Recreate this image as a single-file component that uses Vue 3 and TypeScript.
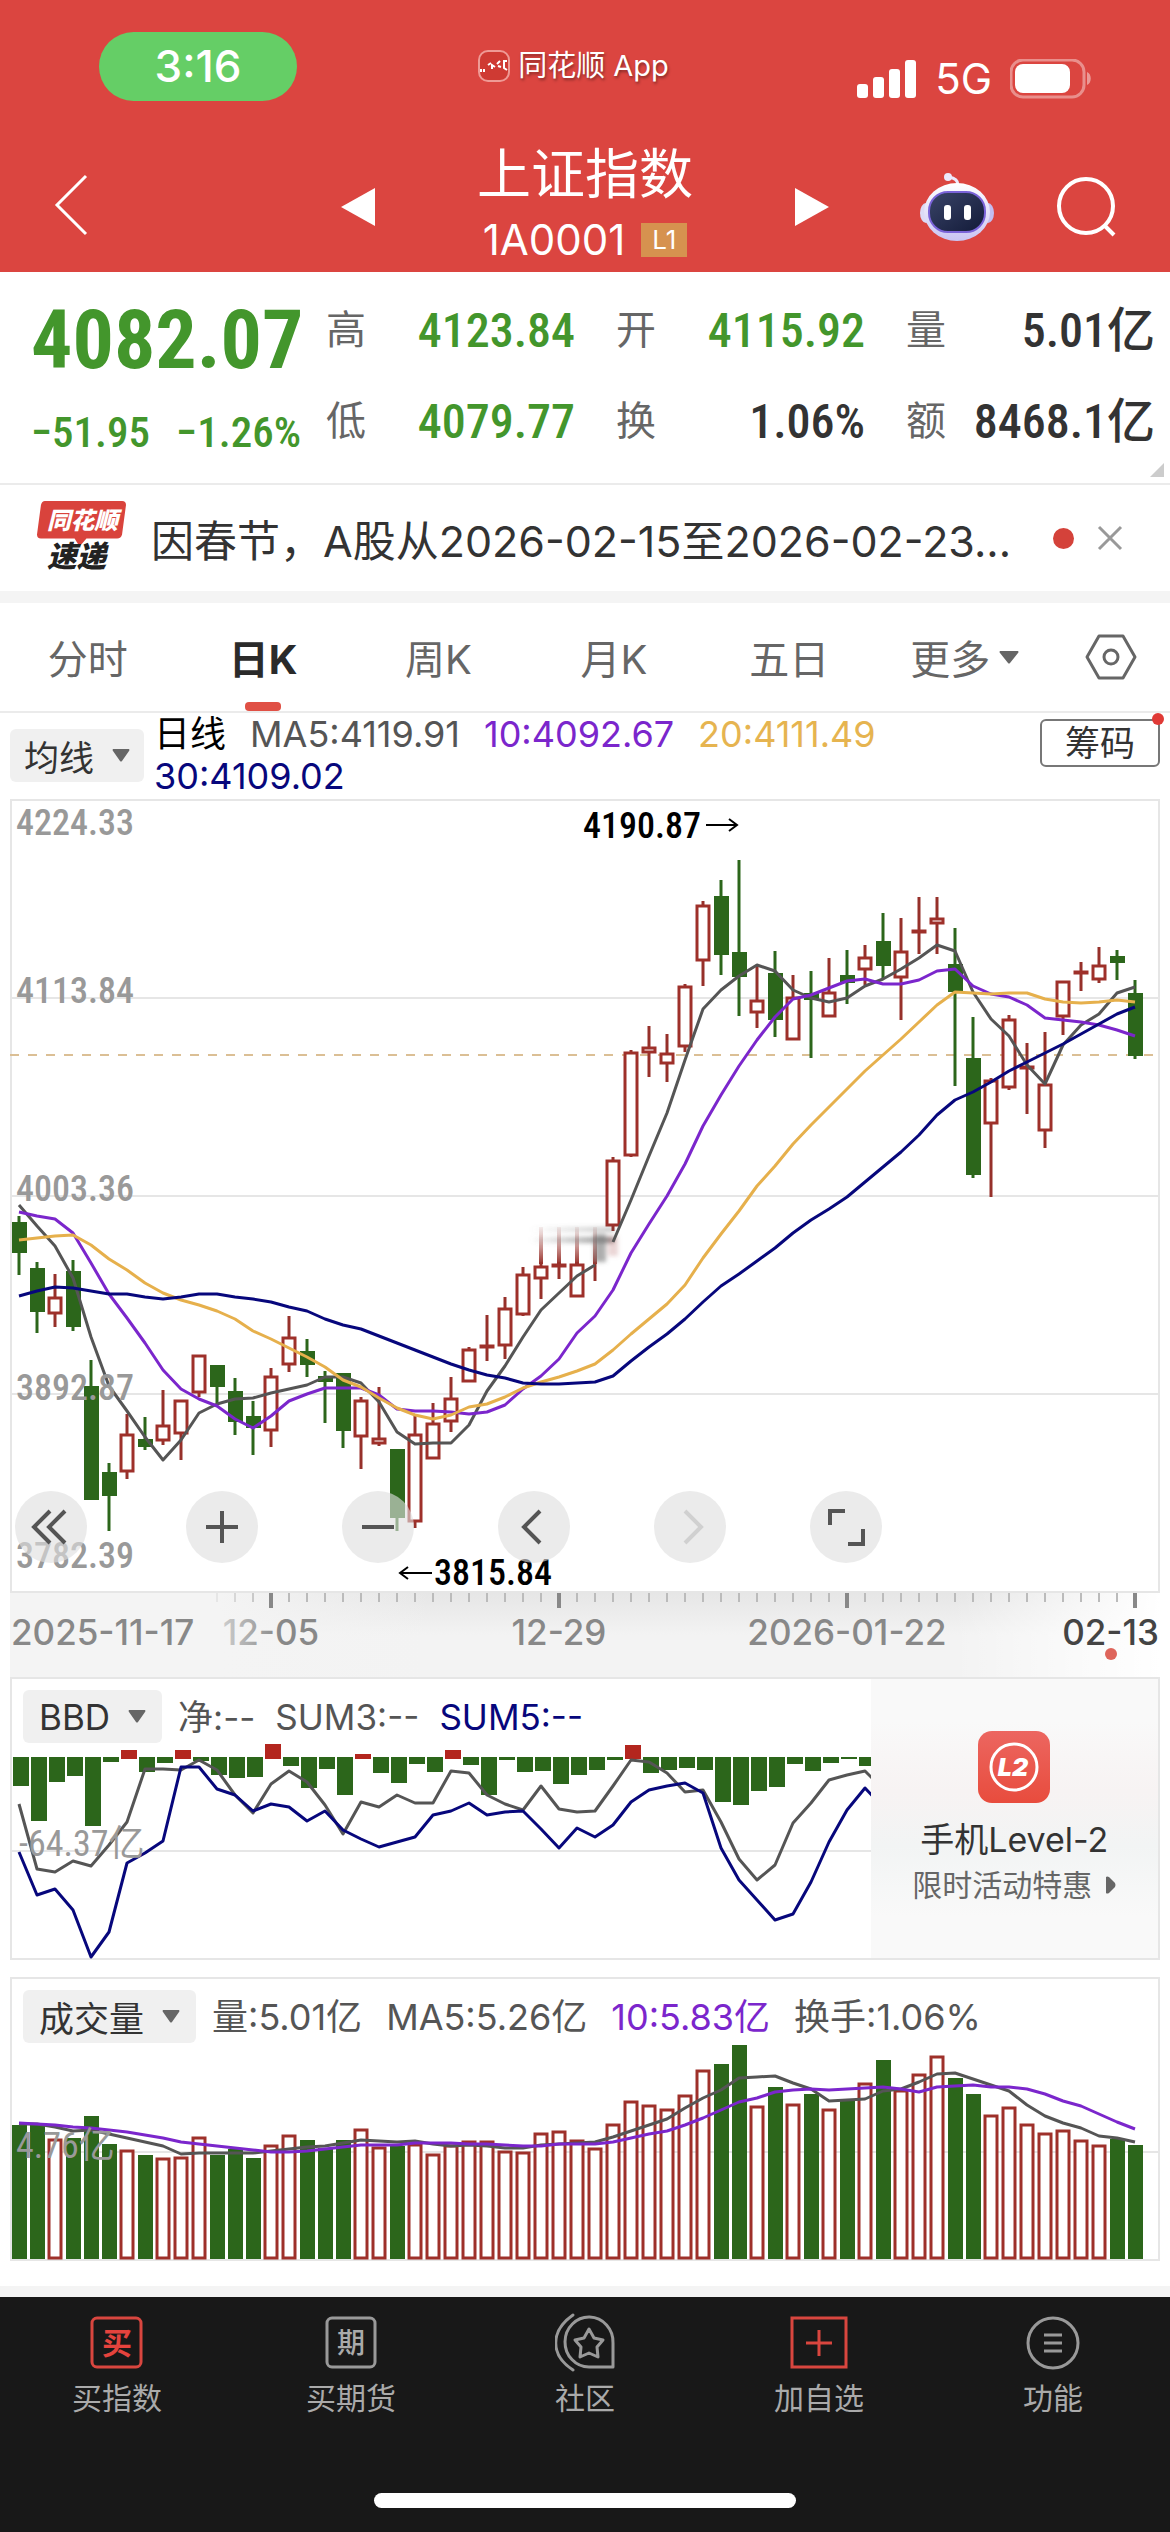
<script setup lang="ts">
type Candle = { up: boolean; high: number; top: number; bottom: number; low: number }

const STEP = 18
const FIRST = 9

const cx = (i: number): number => FIRST + STEP * i
const line = (values: number[]): string => values.map((y, i) => `${cx(i)},${y}`).join(' ')

const quotes = [
  { label: '高', value: '4123.84', down: true },
  { label: '开', value: '4115.92', down: true },
  { label: '量', value: '5.01亿', down: false },
  { label: '低', value: '4079.77', down: true },
  { label: '换', value: '1.06%', down: false },
  { label: '额', value: '8468.1亿', down: false },
]

const tabs = ['分时', '日K', '周K', '月K', '五日']

// u = rising day, d = falling day; then high, body top, body bottom, low in chart units
const rawCandles = `
d 416 422 453 475|d 462 468 512 533|u 474 497 514 527|d 460 471 527 531|d 560 586 700 700|d 663 672 696 731|u 614 634 672 679
d 617 639 647 650|u 590 625 641 645|u 600 600 634 660|u 555 555 593 597|d 565 565 587 603|d 578 591 622 635|d 601 616 628 655
u 568 576 631 647|u 516 537 565 572|d 539 551 565 577|d 571 576 582 623|d 573 573 631 648|u 597 600 637 669|u 587 638 644 646
d 649 649 718 731|u 616 634 722 728|u 603 623 659 659|u 577 598 622 632|u 547 549 582 582|u 515 545 548 561|u 497 508 546 559
u 467 474 515 516|u 462 466 479 499|u 462 464 467 479|u 462 464 497 497|u 462 462 462 481|u 357 360 426 431|u 250 252 356 357
u 226 247 253 277|u 234 253 264 282|u 184 186 247 252|u 101 105 161 186|d 80 96 155 175|d 60 152 177 216|u 165 200 213 228
d 151 173 220 237|u 175 197 240 240|d 171 193 200 258|u 158 192 217 217|d 150 175 183 204|u 145 157 170 185|d 113 141 166 178
u 118 151 178 220|u 97 130 133 154|u 97 118 124 154|d 128 164 192 286|d 217 258 375 378|u 278 280 324 397|u 215 219 288 290
u 243 266 269 314|u 232 284 331 348|u 181 181 217 235|u 162 171 174 191|u 147 165 180 183|d 150 156 163 180|d 180 193 256 259`

const candles: Candle[] = rawCandles
  .trim()
  .split(/[|\n]/)
  .map((row) => {
    const [kind, high, top, bottom, low] = row.trim().split(' ')
    return { up: kind === 'u', high: +high, top: +top, bottom: +bottom, low: +low }
  })

const ma5a = [405, 426, 446, 478, 537, 586, 611, 637, 660, 640, 613, 604, 599, 598, 593, 589, 585, 577, 577, 583, 602, 632, 644, 643, 643, 625, 591, 566, 537, 510, 493, 476, 465]
const ma5b = [442, 400, 356, 313, 260, 209, 190, 176, 165, 171, 190, 198, 202, 198, 186, 179, 169, 158, 145, 151, 192, 219, 236, 265, 284, 245, 225, 214, 193, 187]
const ma10 = [412, 416, 419, 433, 463, 494, 518, 543, 570, 589, 599, 606, 619, 628, 616, 601, 594, 588, 588, 588, 595, 609, 611, 611, 612, 614, 612, 605, 589, 576, 559, 533, 516, 490, 453, 424, 396, 364, 326, 295, 266, 240, 217, 199, 195, 188, 181, 179, 184, 184, 180, 171, 169, 186, 194, 197, 205, 218, 220, 222, 225, 230, 236]
const ma20 = [440, 438, 436, 435, 445, 459, 470, 483, 493, 500, 505, 511, 519, 531, 539, 548, 557, 567, 580, 587, 598, 608, 615, 619, 615, 607, 604, 597, 588, 582, 577, 571, 564, 550, 534, 519, 504, 485, 458, 434, 411, 386, 366, 344, 325, 307, 289, 271, 255, 239, 222, 205, 192, 193, 194, 193, 193, 199, 202, 203, 202, 200, 202]
const ma30 = [496, 491, 487, 488, 491, 494, 494, 497, 499, 497, 494, 494, 497, 499, 502, 507, 511, 519, 525, 529, 536, 543, 550, 557, 564, 570, 575, 578, 583, 584, 584, 583, 582, 576, 561, 547, 534, 519, 502, 486, 474, 461, 448, 433, 420, 409, 397, 382, 367, 352, 335, 315, 300, 292, 282, 271, 262, 253, 244, 234, 224, 214, 207]

const priceLabels = [
  { text: '4224.33', y: 35 },
  { text: '4113.84', y: 203 },
  { text: '4003.36', y: 401 },
  { text: '3892.87', y: 600 },
  { text: '3782.39', y: 768 },
]

const ticks = Array.from({ length: 52 }, (_, k) => k + 11)
const isMajor = (i: number): boolean => (i - 14) % 16 === 0
const tickOpacity = (i: number): number => Math.min(1, (i - 10) / 4)

// positive = net outflow drawn downwards, negative = net inflow drawn upwards
const bbdBars = [29, 64, 25, 19, 69, 5, -7, 15, 6, -7, 4, 18, 21, 20, -13, 9, 31, 12, 38, -3, 16, 26, 7, 15, -7, 8, 38, 3, 15, 14, 27, 18, 13, 3, -12, 16, 13, 11, 13, 45, 48, 34, 30, 7, 14, 6, 2, 9]
const sum3 = [127, 192, 195, 184, 189, 168, 145, 92, 92, 93, 83, 93, 118, 136, 107, 94, 105, 128, 157, 125, 130, 118, 126, 126, 94, 96, 118, 127, 133, 109, 132, 135, 134, 109, 83, 85, 96, 115, 113, 145, 182, 203, 188, 146, 126, 103, 98, 94, 112]
const sum5 = [175, 218, 212, 233, 280, 255, 186, 176, 164, 90, 90, 112, 118, 134, 127, 130, 144, 134, 153, 162, 170, 165, 160, 138, 134, 126, 138, 135, 134, 152, 171, 151, 160, 148, 125, 113, 109, 106, 116, 171, 203, 223, 243, 237, 205, 165, 133, 111, 130]

const volTops = [148, 147, 162, 161, 139, 167, 173, 178, 181, 180, 160, 178, 172, 181, 168, 158, 163, 171, 163, 152, 170, 169, 167, 177, 168, 164, 164, 174, 175, 156, 154, 163, 171, 147, 124, 128, 132, 118, 93, 87, 68, 129, 110, 127, 117, 132, 123, 106, 83, 113, 97, 79, 101, 117, 138, 130, 147, 156, 153, 163, 168, 162, 168]
const volMa5 = [147, 147, 150, 154, 153, 157, 161, 165, 169, 177, 176, 176, 176, 176, 174, 172, 170, 169, 166, 163, 164, 165, 164, 167, 169, 168, 169, 171, 171, 168, 167, 166, 165, 160, 154, 148, 142, 131, 121, 113, 101, 100, 99, 106, 112, 124, 123, 122, 114, 112, 105, 97, 96, 102, 108, 114, 128, 139, 146, 151, 159, 161, 165]
const volMa10 = [146, 147, 148, 150, 151, 153, 155, 158, 161, 165, 167, 169, 171, 173, 175, 175, 174, 172, 170, 168, 168, 168, 166, 166, 166, 167, 167, 168, 169, 169, 167, 167, 167, 165, 161, 157, 154, 148, 141, 133, 125, 121, 115, 113, 112, 113, 112, 111, 110, 112, 115, 110, 109, 108, 110, 110, 112, 117, 124, 129, 137, 145, 152]
</script>

<template>
  <div class="app">
    <header class="header">
      <div class="status">
        <div class="pill">3:16</div>
        <div class="source">
          <svg class="source-icon" viewBox="0 0 32 32">
            <rect x="1" y="1" width="30" height="30" rx="9" fill="#cf3a33" stroke="#ef9a95" stroke-width="2" />
            <path d="M3 19v3M6 19v3M10 15l3-2M14 19v-4l3 2M19 14l3-3M20 16l3 1M26 10v8l3 2M25 11h4" stroke="#fff" stroke-width="2" fill="none" />
          </svg>
          <span>同花顺 App</span>
        </div>
        <div class="system">
          <svg class="signal" viewBox="0 0 60 38">
            <rect x="0" y="24" width="11" height="14" rx="3" /><rect x="16" y="17" width="11" height="21" rx="3" />
            <rect x="32" y="9" width="11" height="29" rx="3" /><rect x="48" y="0" width="11" height="38" rx="3" />
          </svg>
          <span>5G</span>
          <svg class="battery" viewBox="0 0 82 40">
            <rect x="1" y="1" width="73" height="37" rx="12" fill="none" stroke="#fff" stroke-opacity=".4" stroke-width="3" />
            <rect x="5" y="5" width="55" height="29" rx="8" fill="#fff" />
            <path d="M77 13c5 2 5 11 0 13z" fill="#fff" fill-opacity=".45" />
          </svg>
        </div>
      </div>
      <nav class="navbar">
        <div class="nav-left">
          <button class="icon-btn" aria-label="返回">
            <svg class="back" viewBox="0 0 34 62"><path d="M32 2 3 31l29 29" fill="none" stroke="#fff" stroke-width="3" /></svg>
          </button>
        </div>
        <div class="nav-center">
          <button class="icon-btn" aria-label="上一个"><svg class="arrow" viewBox="0 0 34 38"><path d="M34 0v38L0 19z" fill="#fff" /></svg></button>
          <div class="title">
            <h1>上证指数</h1>
            <p>1A0001<span class="badge">L1</span></p>
          </div>
          <button class="icon-btn" aria-label="下一个"><svg class="arrow" viewBox="0 0 34 38"><path d="M0 0v38l34-19z" fill="#fff" /></svg></button>
        </div>
        <div class="nav-right">
          <button class="icon-btn" aria-label="助手">
            <svg class="robot" viewBox="0 0 74 68">
              <defs>
                <linearGradient id="head" x1="0" y1="0" x2="0" y2="1"><stop offset="0" stop-color="#fff" /><stop offset="1" stop-color="#c9c4f3" /></linearGradient>
                <linearGradient id="face" x1="0" y1="0" x2="1" y2="1"><stop offset="0" stop-color="#3a4468" /><stop offset="1" stop-color="#121a38" /></linearGradient>
              </defs>
              <path d="M38 12c0-5-3-7-9-8" fill="none" stroke="#ece9fb" stroke-width="3" />
              <circle cx="28" cy="4" r="4" fill="#ece9fb" />
              <ellipse cx="6" cy="40" rx="6" ry="10" fill="#dcdaf6" /><ellipse cx="68" cy="40" rx="6" ry="10" fill="#c3bdf0" />
              <ellipse cx="37" cy="39" rx="33" ry="29" fill="url(#head)" />
              <rect x="9" y="19" width="56" height="40" rx="19" fill="url(#face)" stroke="#7a63d8" stroke-width="2" />
              <rect x="24" y="32" width="7" height="15" rx="3" fill="#fff" /><rect x="44" y="32" width="7" height="15" rx="3" fill="#fff" />
            </svg>
          </button>
          <button class="icon-btn" aria-label="搜索">
            <svg class="search" viewBox="0 0 62 62"><circle cx="30" cy="30" r="27" fill="none" stroke="#fff" stroke-width="4" /><path d="m48 49 10 10" stroke="#fff" stroke-width="4" /></svg>
          </button>
        </div>
      </nav>
    </header>

    <section class="quote">
      <div class="last">
        <strong>4082.07</strong>
        <div class="change"><span>−51.95</span><span>−1.26%</span></div>
      </div>
      <dl class="stats">
        <div v-for="q in quotes" :key="q.label" class="stat">
          <dt>{{ q.label }}</dt>
          <dd :class="{ down: q.down }">{{ q.value }}</dd>
        </div>
      </dl>
      <span class="corner"></span>
    </section>

    <section class="news">
      <svg class="news-logo" viewBox="0 0 90 80">
        <path d="M8 3h78q4 0 4 4l-4 30q-1 4-5 4H50l-7 8-5-8H4q-4 0-4-4L4 7q1-4 4-4z" fill="#d9433c" />
        <text x="10" y="31" class="logo-top">同花顺</text>
        <text x="10" y="70" class="logo-bottom">速递</text>
      </svg>
      <a class="news-text" href="#">因春节，A股从2026-02-15至2026-02-23...</a>
      <span class="news-dot"></span>
      <button class="icon-btn" aria-label="关闭"><svg class="close" viewBox="0 0 26 26"><path d="m2 2 22 22M24 2 2 24" stroke="#999" stroke-width="3" /></svg></button>
    </section>

    <nav class="tabs">
      <button v-for="t in tabs" :key="t" class="tab" :class="{ active: t === '日K' }">{{ t }}</button>
      <button class="tab more">更多<svg class="more-caret" viewBox="0 0 20 13"><path d="M1 0h18q1 1 0 2l-8 10q-1 1-2 0L1 2Q0 1 1 0z" fill="#666" /></svg></button>
      <button class="tab setting" aria-label="设置">
        <svg class="hex" viewBox="0 0 52 46"><path d="M14 2h24l12 21-12 21H14L2 23z" fill="none" stroke="#666" stroke-width="3" stroke-linejoin="round" /><circle cx="26" cy="23" r="7" fill="none" stroke="#666" stroke-width="3" /></svg>
      </button>
    </nav>

    <main class="charts">
      <div class="ma-row">
        <button class="chip">均线<svg class="caret" viewBox="0 0 18 13"><path d="M1 0h16q1 1 0 2l-7 10q-1 1-2 0L1 2Q0 1 1 0z" fill="#666" /></svg></button>
        <p class="legend ma-legend">
          <span class="black">日线</span><span>MA5:4119.91</span><span class="purple">10:4092.67</span><span class="yellow">20:4111.49</span><span class="navy">30:4109.02</span>
        </p>
        <button class="chips-btn">筹码</button>
      </div>

      <div class="panel">
        <svg class="plot" viewBox="0 -1 1150 794">
          <defs>
            <linearGradient id="haze" x1="0" y1="0" x2="1" y2="0"><stop offset="0" stop-color="#777" stop-opacity="0" /><stop offset="1" stop-color="#555" stop-opacity=".7" /></linearGradient>
            <linearGradient id="wick" x1="0" y1="0" x2="0" y2="1"><stop offset="0" stop-color="#b2605b" stop-opacity=".1" /><stop offset="1" stop-color="#97302a" /></linearGradient>
            <filter id="soft" x="-20%" y="-50%" width="140%" height="200%"><feGaussianBlur stdDeviation="2" /></filter>
          </defs>
          <path d="M1 198h1148M1 396h1148M1 594h1148" class="grid" />
          <rect x="1" y="0" width="1148" height="792" class="frame" />
          <path d="M0 255h1148" class="last-price" />
          <g v-for="(c, i) in candles" :key="i" :class="c.up ? 'up' : 'fall'">
            <template v-if="c.up">
              <path :d="`M${cx(i)} ${c.high}V${c.top}M${cx(i)} ${c.bottom}V${c.low}`" class="wick" />
              <rect v-if="c.bottom > c.top" :x="cx(i) - 6" :y="c.top + 1" width="12" :height="Math.max(1, c.bottom - c.top - 2)" />
            </template>
            <template v-else>
              <path :d="`M${cx(i)} ${c.high}V${c.low}`" class="wick" />
              <rect :x="cx(i) - 7" :y="c.top" width="15" :height="c.bottom - c.top" />
            </template>
          </g>
          <g>
            <rect v-for="x in [529, 547, 565, 583]" :key="x" :x="x" y="427" width="4" height="37" fill="url(#wick)" />
            <g filter="url(#soft)">
              <rect x="520" y="427" width="84" height="5" fill="url(#haze)" opacity=".5" />
              <rect x="520" y="437" width="84" height="6" fill="url(#haze)" />
              <rect x="584" y="434" width="12" height="28" fill="#777" opacity=".6" />
              <rect x="598" y="436" width="10" height="20" fill="#b77" opacity=".3" />
            </g>
          </g>
          <polyline :points="line(ma5a)" class="l-gray" />
          <g transform="translate(594 0)"><polyline :points="line(ma5b)" class="l-gray" /></g>
          <polyline :points="line(ma10)" class="l-purple" />
          <polyline :points="line(ma20)" class="l-yellow" />
          <polyline :points="line(ma30)" class="l-navy" />
          <text v-for="p in priceLabels" :key="p.text" x="6" :y="p.y" class="scale">{{ p.text }}</text>
          <text x="573" y="38" class="mark">4190.87</text>
          <path d="M696 25h31M719 19l8 6-8 6" class="mark-arrow" />
          <text x="424" y="785" class="mark">3815.84</text>
          <path d="M422 773h-32M398 767l-8 6 8 6" class="mark-arrow" />
        </svg>
        <div class="tools">
          <button class="tool first" aria-label="最早"><svg viewBox="0 0 72 72"><path d="M35 20 19 36l16 16M50 20 34 36l16 16" /></svg></button>
          <button class="tool" aria-label="放大"><svg viewBox="0 0 72 72"><path d="M20 36h32M36 20v32" /></svg></button>
          <button class="tool" aria-label="缩小"><svg viewBox="0 0 72 72"><path d="M20 36h32" /></svg></button>
          <button class="tool" aria-label="左移"><svg viewBox="0 0 72 72"><path d="M42 20 26 36l16 16" /></svg></button>
          <button class="tool off" aria-label="右移" disabled><svg viewBox="0 0 72 72"><path d="m31 20 16 16-16 16" /></svg></button>
          <button class="tool" aria-label="全屏"><svg viewBox="0 0 72 72"><path d="M20 34V20h15M53 38v15H38" /></svg></button>
        </div>
      </div>

      <svg class="plot axis" viewBox="0 0 1150 84">
        <defs>
          <linearGradient id="fade" x1="0" y1="0" x2="1" y2="0"><stop offset=".82" stop-color="#fff" stop-opacity="0" /><stop offset="1" stop-color="#fff" /></linearGradient>
          <linearGradient id="band" x1="0" y1="0" x2="0" y2="1"><stop offset="0" stop-color="#e6e6e6" /><stop offset=".5" stop-color="#f3f3f3" /></linearGradient>
          <linearGradient id="left" x1="0" y1="0" x2="1" y2="0"><stop offset=".5" stop-color="#f4f4f4" /><stop offset="1" stop-color="#f4f4f4" stop-opacity="0" /></linearGradient>
          <linearGradient id="first-date" x1="0" y1="0" x2="1" y2="0"><stop offset="0" stop-color="#ccc" /><stop offset=".6" stop-color="#888" /></linearGradient>
        </defs>
        <rect width="1150" height="84" fill="url(#band)" />
        <rect width="420" height="84" fill="url(#left)" />
        <rect width="1150" height="84" fill="url(#fade)" />
        <path v-for="i in ticks" :key="i" :d="`M${cx(i)} 0v${isMajor(i) ? 15 : 9}`" :class="isMajor(i) ? 'tick-major' : 'tick'" :stroke-opacity="tickOpacity(i)" />
        <text x="1" y="52" class="date">2025-11-17</text>
        <text x="261" y="52" class="date pale" text-anchor="middle">12-05</text>
        <text x="549" y="52" class="date" text-anchor="middle">12-29</text>
        <text x="837" y="52" class="date" text-anchor="middle">2026-01-22</text>
        <text x="1149" y="52" class="date now" text-anchor="end">02-13</text>
        <circle cx="1101" cy="61" r="6" fill="#de655b" />
      </svg>

      <section class="panel bbd">
        <svg class="plot" viewBox="0 0 1150 283">
          <path d="M1 174h1148" class="grid" />
          <rect x="1" y="1" width="1148" height="281" class="frame" />
          <svg x="0" y="0" width="861" height="283" viewBox="0 0 861 283">
            <rect v-for="(h, i) in bbdBars" :key="i" :x="cx(i) - 6" :y="h > 0 ? 80 : 80 + h" width="16" :height="h > 0 ? h : 2 - h" :fill="h > 0 ? '#2c661b' : '#b3261e'" />
            <polyline :points="line(sum3)" class="l-gray" />
            <polyline :points="line(sum5)" class="l-navy" />
          </svg>
          <text x="9" y="179" class="scale sub">-64.37亿</text>
        </svg>
        <div class="panel-head">
          <button class="chip">BBD<svg class="caret" viewBox="0 0 18 13"><path d="M1 0h16q1 1 0 2l-7 10q-1 1-2 0L1 2Q0 1 1 0z" fill="#666" /></svg></button>
          <p class="legend flow-legend"><span>净:--</span><span>SUM3:--</span><span class="navy">SUM5:--</span></p>
        </div>
        <a class="promo" href="#">
          <svg class="promo-icon" viewBox="0 0 72 72">
            <defs><linearGradient id="l2" x1="0" y1="0" x2="0" y2="1"><stop offset="0" stop-color="#ec6660" /><stop offset="1" stop-color="#e84c3d" /></linearGradient></defs>
            <rect width="72" height="72" rx="14" fill="url(#l2)" />
            <circle cx="36" cy="36" r="23" fill="none" stroke="#fff" stroke-width="3" />
            <text x="35" y="45" text-anchor="middle" class="l2">L2</text>
          </svg>
          <span class="promo-title">手机Level-2</span>
          <span class="promo-sub">限时活动特惠<svg class="promo-arrow" viewBox="0 0 10 18"><path d="M0 1q1-1 3 0l6 6q1 2 0 4l-6 6q-2 1-3 0z" fill="#666" /></svg></span>
        </a>
      </section>

      <section class="panel volume">
        <svg class="plot" viewBox="0 0 1150 284">
          <rect x="1" y="1" width="1148" height="282" class="frame" />
          <path d="M1 175h1148" class="grid" />
          <g v-for="(t, i) in volTops" :key="i" :class="candles[i].up ? 'up' : 'fall'">
            <rect v-if="candles[i].up" :x="cx(i) - 6" :y="t + 1" width="12" :height="280 - t" />
            <rect v-else :x="cx(i) - 7" :y="t" width="15" :height="282 - t" />
          </g>
          <polyline :points="line(volMa5)" class="l-gray" />
          <polyline :points="line(volMa10)" class="l-purple" />
          <text x="6" y="181" class="scale sub">4.76亿</text>
        </svg>
        <div class="panel-head">
          <button class="chip">成交量<svg class="caret" viewBox="0 0 18 13"><path d="M1 0h16q1 1 0 2l-7 10q-1 1-2 0L1 2Q0 1 1 0z" fill="#666" /></svg></button>
          <p class="legend"><span>量:5.01亿</span><span>MA5:5.26亿</span><span class="purple">10:5.83亿</span><span>换手:1.06%</span></p>
        </div>
      </section>
    </main>

    <footer class="footer">
      <nav class="menu">
        <button class="menu-item">
          <svg viewBox="0 0 60 60"><rect x="5" y="5" width="49" height="49" rx="5" fill="none" stroke="#d9463f" stroke-width="3" /><text x="30" y="41" text-anchor="middle" class="glyph red">买</text></svg>买指数
        </button>
        <button class="menu-item">
          <svg viewBox="0 0 60 60"><rect x="6" y="5" width="48" height="49" rx="5" fill="none" stroke="#999" stroke-width="3" /><text x="30" y="40" text-anchor="middle" class="glyph">期</text></svg>买期货
        </button>
        <button class="menu-item">
          <svg viewBox="0 0 60 60"><g fill="none" stroke="#999" stroke-width="3" stroke-linecap="round" stroke-linejoin="round"><path d="M18 2C-5 18-5 42 18 57" /><path d="M58 54V30a24 25 0 1 0-24 24z" /><path d="m34 16 5 9 9 2-6 7 1 10-9-4-9 4 1-10-6-7 9-2z" /></g></svg>社区
        </button>
        <button class="menu-item">
          <svg viewBox="0 0 60 60"><path d="M3 5h54v49H3zM30 17v26M17 30h26" fill="none" stroke="#d9463f" stroke-width="3" /></svg>加自选
        </button>
        <button class="menu-item">
          <svg viewBox="0 0 60 60"><circle cx="30" cy="30" r="25" fill="none" stroke="#999" stroke-width="3" /><path d="M21 22h18M21 30h18M21 38h18" stroke="#999" stroke-width="3" /></svg>功能
        </button>
      </nav>
      <div class="home-bar"></div>
    </footer>
  </div>
</template>

<style>
body {
  background: #181818;
}
</style>

<style scoped>
.app {
  background: #fff;
  color: #333;
  font-family: Inter, "Noto Sans CJK SC", sans-serif;
}
h1, p, dl, dd {
  margin: 0;
}
a {
  color: inherit;
  text-decoration: none;
}
button {
  border: 0;
  padding: 0;
  background: none;
  color: inherit;
  font: inherit;
}
svg {
  display: block;
  flex: none;
}
.header {
  background: #db4540;
  color: #fff;
}
.status {
  display: grid;
  grid-template-columns: 1fr auto 1fr;
  align-items: start;
  height: 110px;
  padding: 32px 78px 0 99px;
}
.pill {
  width: 198px;
  border-radius: 35px;
  background: #65ce66;
  font-size: 44px;
  font-weight: 500;
  line-height: 69px;
  text-align: center;
}
.source {
  display: flex;
  align-items: center;
  gap: 8px;
  margin-right: 44px;
  padding-top: 14px;
  font-size: 29px;
  line-height: 40px;
  text-shadow: 1px 2px 3px rgba(0, 0, 0, 0.4);
}
.source-icon {
  width: 32px;
}
.system {
  display: flex;
  justify-content: flex-end;
  align-items: center;
  gap: 18px;
  padding-top: 22px;
  font-size: 42px;
  line-height: 50px;
}
.signal {
  width: 60px;
  fill: #fff;
}
.battery {
  width: 82px;
}
.navbar {
  display: grid;
  grid-template-columns: minmax(0, 1fr) 488px minmax(0, 1fr);
  align-items: center;
  height: 130px;
}
.nav-left {
  padding-left: 54px;
}
.nav-center {
  display: flex;
  justify-content: space-between;
  align-items: center;
}
.nav-right {
  display: flex;
  align-items: center;
  justify-content: flex-end;
  gap: 62px;
  padding-right: 52px;
}
.back {
  width: 34px;
}
.arrow {
  width: 34px;
}
.robot {
  width: 74px;
}
.search {
  width: 62px;
}
.title {
  text-align: center;
}
.title h1 {
  font-size: 54px;
  font-weight: 400;
  line-height: 66px;
}
.title p {
  display: flex;
  align-items: center;
  justify-content: center;
  gap: 16px;
  font-size: 42px;
  line-height: 64px;
}
.badge {
  padding: 0 11px;
  background: #d6924f;
  font-size: 26px;
  line-height: 34px;
}
.quote {
  position: relative;
  display: flex;
  gap: 25px;
  padding: 29px 15px 31px 31px;
  border-bottom: 2px solid #ebebeb;
  font-family: "Roboto Condensed", Roboto, "Noto Sans CJK SC", sans-serif;
}
.last {
  display: flex;
  flex-direction: column;
  justify-content: space-between;
  width: 270px;
  color: #43962c;
}
.last strong {
  font-size: 82px;
  font-weight: 700;
  line-height: 78px;
}
.change {
  display: flex;
  justify-content: space-between;
  font-size: 43px;
  font-weight: 500;
  line-height: 40px;
}
.stats {
  display: grid;
  flex: 1;
  grid-template-columns: repeat(3, 1fr);
  gap: 31px 41px;
}
.stat {
  display: flex;
  justify-content: space-between;
  font-size: 48px;
  line-height: 60px;
}
.stat dt {
  color: #666;
  font-size: 40px;
}
.stat dd {
  font-weight: 500;
  white-space: nowrap;
}
.stat .down {
  color: #43962c;
}
.corner {
  position: absolute;
  right: 6px;
  bottom: 6px;
  border: 7px solid;
  border-color: transparent #ccc #ccc transparent;
}
.news {
  display: flex;
  align-items: center;
  height: 106px;
  padding: 0 47px 0 37px;
  border-bottom: 12px solid #f4f4f4;
}
.news-logo {
  width: 89px;
  overflow: visible;
}
.logo-top {
  fill: #fff;
  font-size: 24px;
  font-style: italic;
  font-weight: 900;
}
.logo-bottom {
  fill: #222;
  font-size: 30px;
  font-style: italic;
  font-weight: 900;
}
.news-text {
  flex: 1;
  margin-left: 25px;
  font-size: 43px;
  white-space: nowrap;
}
.news-dot {
  width: 21px;
  height: 21px;
  margin-right: 23px;
  border-radius: 50%;
  background: #d4423a;
}
.close {
  width: 26px;
}
.tabs {
  display: flex;
  border-bottom: 2px solid #ebebeb;
}
.tab {
  position: relative;
  display: flex;
  flex: 176;
  align-items: center;
  justify-content: center;
  height: 108px;
  color: #666;
  font-size: 40px;
}
.tab.active {
  color: #2a2a2a;
  font-weight: 700;
}
.tab.active::after {
  position: absolute;
  bottom: 0;
  width: 36px;
  height: 9px;
  border-radius: 4px;
  background: #e05045;
  content: "";
}
.more {
  gap: 9px;
}
.more-caret {
  width: 20px;
}
.setting {
  flex: 118;
}
.hex {
  width: 52px;
}
.charts {
  padding: 0 10px 25px;
  border-bottom: 11px solid #f4f4f4;
}
.ma-row {
  display: flex;
  align-items: flex-start;
  height: 86px;
}
.chip {
  display: flex;
  flex: none;
  align-items: center;
  gap: 18px;
  height: 53px;
  padding: 0 16px;
  border-radius: 6px;
  background: #f0f0f0;
  font-size: 35px;
  white-space: nowrap;
}
.ma-row .chip {
  margin-top: 16px;
  padding: 0 14px;
}
.caret {
  width: 18px;
}
.legend {
  display: flex;
  flex-wrap: wrap;
  column-gap: 24px;
  color: #555;
  font-size: 36px;
  line-height: 42px;
}
.ma-legend {
  flex: 1;
  margin-left: 10px;
  padding-right: 60px;
}
.flow-legend {
  column-gap: 20px;
  font-size: 35px;
}
.black {
  color: #000;
}
.purple {
  color: #7b26cc;
}
.yellow {
  color: #e6b450;
}
.navy {
  color: #07077c;
}
.chips-btn {
  position: relative;
  height: 48px;
  margin-top: 6px;
  padding: 0 23px;
  border: 2px solid #777;
  border-radius: 6px;
  font-size: 35px;
  line-height: 40px;
}
.chips-btn::after {
  position: absolute;
  top: -8px;
  right: -6px;
  width: 12px;
  height: 12px;
  border-radius: 50%;
  background: #e03a36;
  content: "";
}
.panel {
  display: grid;
}
.panel > * {
  grid-area: 1 / 1;
}
.plot {
  width: 100%;
  height: auto;
  overflow: visible;
}
.plot text {
  font-family: "Roboto Condensed", Roboto, "Noto Sans CJK SC", sans-serif;
}
.grid {
  stroke: #e6e6e6;
  stroke-width: 2;
}
.frame {
  fill: none;
  stroke: #e6e6e6;
  stroke-width: 2;
}
.last-price {
  stroke: #dbbf95;
  stroke-dasharray: 9 9;
  stroke-width: 2;
}
.up .wick {
  stroke: #96302a;
  stroke-width: 3;
}
.up rect {
  fill: #fff;
  stroke: #9e302a;
  stroke-width: 3;
}
.fall .wick {
  stroke: #2c661b;
  stroke-width: 3;
}
.fall rect {
  fill: #2c661b;
}
polyline {
  fill: none;
  stroke-width: 3;
  stroke-linejoin: round;
}
.l-gray {
  stroke: #555;
}
.l-purple {
  stroke: #7b26cc;
}
.l-yellow {
  stroke: #e6b04c;
}
.l-navy {
  stroke: #07077c;
}
.scale {
  fill: #999;
  font-size: 36px;
  font-weight: 500;
}
.sub {
  font-weight: 400;
}
.mark {
  fill: #000;
  font-size: 36px;
  font-weight: 500;
}
.mark-arrow {
  fill: none;
  stroke: #000;
  stroke-width: 2;
}
.tools {
  display: flex;
  align-self: end;
  gap: 84px;
  margin: 0 0 30px 5px;
}
.tool {
  width: 72px;
  height: 72px;
  border-radius: 50%;
  background: rgba(223, 223, 223, 0.62);
}
.tool.first {
  margin-right: 15px;
}
.tool path {
  fill: none;
  stroke: #555;
  stroke-width: 4;
}
.tool.off path {
  stroke: #d0d0d0;
}
.tick {
  stroke: #bbb;
  stroke-width: 2;
}
.tick-major {
  stroke: #888;
  stroke-width: 4;
}
.axis .date {
  fill: #888;
  font-family: Inter, sans-serif;
  font-size: 35px;
  font-weight: 500;
}
.axis .pale {
  fill: url(#first-date);
}
.axis .now {
  fill: #444;
}
.panel-head {
  display: flex;
  align-items: center;
  align-self: start;
  gap: 16px;
  padding: 13px 13px 0;
}
.bbd .promo {
  display: flex;
  flex-direction: column;
  align-items: center;
  justify-self: end;
  width: 25%;
  height: 279px;
  margin: 2px 2px 0 0;
  background: linear-gradient(#f9f9f9 15%, #f7f3f3 40%, #f2f4f4 60%, #f9f9f9 85%);
}
.promo-icon {
  width: 72px;
  margin-top: 52px;
}
.l2 {
  fill: #fff;
  font-size: 25px;
  font-style: italic;
  font-weight: 900;
}
.promo-title {
  margin-top: 12px;
  font-size: 34px;
  line-height: 50px;
}
.promo-sub {
  display: flex;
  align-items: center;
  gap: 14px;
  color: #666;
  font-size: 30px;
  line-height: 40px;
}
.promo-arrow {
  width: 10px;
}
.volume {
  margin-top: 17px;
}
.footer {
  display: flow-root;
  padding-bottom: 24px;
  background: #181818;
}
.menu {
  display: flex;
  padding-top: 16px;
}
.menu-item {
  display: flex;
  flex: 1;
  flex-direction: column;
  align-items: center;
  gap: 5px;
  color: #aaa;
  font-size: 30px;
  line-height: 40px;
}
.menu-item svg {
  width: 60px;
}
.glyph {
  fill: #aaa;
  font-size: 28px;
  font-weight: 500;
}
.red {
  fill: #e5433d;
  font-size: 30px;
  font-weight: 700;
}
.home-bar {
  width: 36%;
  height: 15px;
  margin: 75px auto 0;
  border-radius: 8px;
  background: #fff;
}
</style>
